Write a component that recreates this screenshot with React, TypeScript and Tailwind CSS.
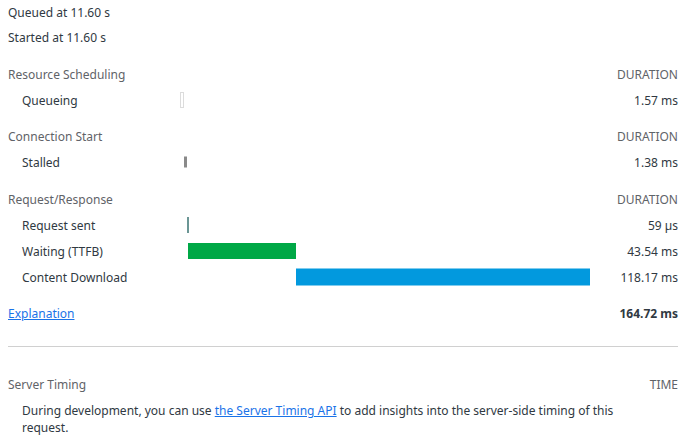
const TOTAL = 164.72;
const SCALE = 410 / TOTAL;

type Bar = { label: string; start: number; dur: number; text: string; kind: string };

const sections: { title: string; rows: Bar[] }[] = [
  {
    title: 'Resource Scheduling',
    rows: [{ label: 'Queueing', start: 0, dur: 1.57, text: '1.57 ms', kind: 'queue' }],
  },
  {
    title: 'Connection Start',
    rows: [{ label: 'Stalled', start: 1.57, dur: 1.38, text: '1.38 ms', kind: 'stalled' }],
  },
  {
    title: 'Request/Response',
    rows: [
      { label: 'Request sent', start: 2.95, dur: 0.8, text: '59 µs', kind: 'sent' },
      { label: 'Waiting (TTFB)', start: 3.2, dur: 43.54, text: '43.54 ms', kind: 'waiting' },
      { label: 'Content Download', start: 46.74, dur: 118.17, text: '118.17 ms', kind: 'download' },
    ],
  },
];

const barClass: Record<string, string> = {
  queue: 'h-4 border border-[#dcdcdc] bg-white',
  stalled: 'h-[11px] bg-[#8a8a8a]',
  sent: 'h-4 bg-[#6b9695]',
  waiting: 'h-4 bg-[#00a846]',
  download: 'h-[17px] bg-[#0299de]',
};

function TimingRow({ row }: { row: Bar }) {
  return (
    <div className="grid h-[26px] grid-cols-[172px_410px_1fr] items-center">
      <div className="pl-[14px] text-[#303942]">{row.label}</div>
      <div className="relative h-full">
        <div
          className={`absolute top-1/2 -translate-y-1/2 ${barClass[row.kind]}`}
          style={{ left: Math.round(row.start * SCALE), width: Math.max(2, Math.round(row.dur * SCALE)) }}
        />
      </div>
      <div className="text-right text-[#303942]">{row.text}</div>
    </div>
  );
}

export default function App() {
  return (
    <div
      className="w-[690px] bg-white pl-2 pr-3 text-[12px] leading-[17px] text-[#303942]"
      style={{ fontFamily: '"Segoe UI", "Noto Sans", sans-serif' }}
    >
      <div className="flex h-[25px] items-center">Queued at 11.60 s</div>
      <div className="flex h-[25px] items-center">Started at 11.60 s</div>

      {sections.map((s, i) => (
        <div key={s.title} className={i === 1 ? 'mt-[10px]' : 'mt-[11px]'}>
          <div className="flex h-[26px] items-center justify-between text-[#5f6368]">
            <span>{s.title}</span>
            <span>DURATION</span>
          </div>
          {s.rows.map((r) => (
            <TimingRow key={r.label} row={r} />
          ))}
        </div>
      ))}

      <div className="mt-[10px] flex h-[26px] items-center justify-between">
        <a href="#" className="text-[#1a73e8] underline">
          Explanation
        </a>
        <span className="font-bold">164.72 ms</span>
      </div>

      <div className="mt-[20px] border-t border-[#d0d0d0]" />

      <div className="mt-[24px] flex h-[26px] items-center justify-between text-[#5f6368]">
        <span>Server Timing</span>
        <span>TIME</span>
      </div>
      <p className="mt-[5px] pl-[14px] pr-[40px]">
        During development, you can use{' '}
        <a href="#" className="text-[#1a73e8] underline">
          the Server Timing API
        </a>{' '}
        to add insights into the server-side timing of this request.
      </p>
    </div>
  );
}
